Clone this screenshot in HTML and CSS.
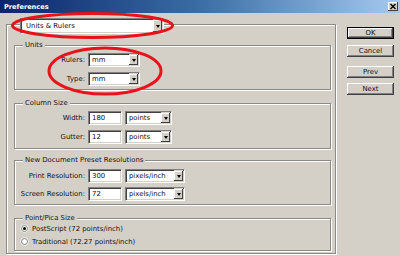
FILE: index.html
```html
<!DOCTYPE html>
<html>
<head>
<meta charset="utf-8">
<link rel="stylesheet" href="styles.css">
</head>
<body>
<div class="titlebar">
  <span class="title">Preferences</span>
  <span class="close"><svg width="8" height="7" viewBox="0 0 8 7"><path d="M1.5 1 L6.5 6 M6.5 1 L1.5 6" stroke="#000" stroke-width="1.4"/></svg></span>
</div>
<div class="content">
  <div class="main">
    <div class="head">
      <div class="select s-section">Units &amp; Rulers<span class="arrow"></span></div>
    </div>

    <div class="group g-units">
      <div class="legend">Units</div>
      <div class="rows">
        <span class="lbl">Rulers:</span>
        <div class="select s-mm">mm<span class="arrow"></span></div>
        <span class="lbl">Type:</span>
        <div class="select s-mm">mm<span class="arrow"></span></div>
      </div>
    </div>

    <div class="group g-col">
      <div class="legend">Column Size</div>
      <div class="rows rows3">
        <span class="lbl">Width:</span>
        <div class="input">180</div>
        <div class="select s-pts">points<span class="arrow"></span></div>
        <span class="lbl">Gutter:</span>
        <div class="input">12</div>
        <div class="select s-pts">points<span class="arrow"></span></div>
      </div>
    </div>

    <div class="group g-res">
      <div class="legend">New Document Preset Resolutions</div>
      <div class="rows rows3">
        <span class="lbl">Print Resolution:</span>
        <div class="input">300</div>
        <div class="select s-ppi">pixels/inch<span class="arrow"></span></div>
        <span class="lbl">Screen Resolution:</span>
        <div class="input">72</div>
        <div class="select s-ppi">pixels/inch<span class="arrow"></span></div>
      </div>
    </div>

    <div class="group g-pt">
      <div class="legend">Point/Pica Size</div>
      <div class="radios">
        <div class="radio-row"><span class="radio checked"></span><span>PostScript (72 points/inch)</span></div>
        <div class="radio-row"><span class="radio"></span><span>Traditional (72.27 points/inch)</span></div>
      </div>
    </div>
  </div>

  <div class="side">
    <div class="btn default">OK</div>
    <div class="btn cancel">Cancel</div>
    <div class="btn prev">Prev</div>
    <div class="btn next">Next</div>
  </div>
</div>

<svg class="marks" width="400" height="256" viewBox="0 0 400 256">
  <ellipse cx="92.5" cy="25.5" rx="80" ry="12" fill="none" stroke="#e8121a" stroke-width="3"/>
  <ellipse cx="105" cy="71" rx="56" ry="23" fill="none" stroke="#e8121a" stroke-width="3"/>
</svg>
</body>
</html>
```

FILE: styles.css
```css
html, body {
  margin: 0;
  padding: 0;
}
body {
  width: 400px;
  height: 256px;
  overflow: hidden;
  position: relative;
  background: #d4d0c8;
  font-family: "DejaVu Sans", Verdana, sans-serif;
  font-size: 6.9px;
  color: #111;
}

.titlebar {
  height: 13px;
  box-sizing: border-box;
  padding: 0 2px 0 4px;
  display: flex;
  align-items: center;
  justify-content: space-between;
  background: linear-gradient(to right, #0a246a 0%, #3a6ea5 50%, #a6caf0 100%);
}
.title {
  color: #fff;
  font-weight: bold;
  font-size: 6.6px;
}
.close {
  width: 10px;
  height: 9px;
  box-sizing: border-box;
  display: flex;
  align-items: center;
  justify-content: center;
  background: #d4d0c8;
  box-shadow: inset -1px -1px 0 #404040, inset 1px 1px 0 #fff;
}

.content {
  display: flex;
  padding: 11px 0 0 6px;
}

.main {
  width: 330px;
  height: 230px;
  box-sizing: border-box;
  border: 1px solid #8c8a84;
  box-shadow: inset 1px 1px 0 #fff, 1px 1px 0 #fff;
}
.head {
  margin: -7px 0 0 13px;
}

.select {
  height: 14px;
  box-sizing: border-box;
  display: flex;
  align-items: center;
  justify-content: space-between;
  padding-left: 3px;
  background: #fff;
  border: 1px solid;
  border-color: #808080 #fff #fff #808080;
  box-shadow: inset 1px 1px 0 #404040, inset -1px -1px 0 #d4d0c8;
}
.s-section {
  width: 144px;
  height: 16px;
  padding-left: 5px;
}
.s-mm { width: 52px; }
.s-pts { width: 47px; }
.s-ppi { width: 60px; }

.arrow {
  width: 9px;
  height: 100%;
  box-sizing: border-box;
  margin-right: 1px;
  background: #d4d0c8;
  box-shadow: inset -1px -1px 0 #404040, inset 1px 1px 0 #fff;
  border-top: 1px solid transparent;
  border-bottom: 1px solid transparent;
  display: flex;
  align-items: center;
  justify-content: center;
}
.arrow::before {
  content: "";
  border-left: 2.5px solid transparent;
  border-right: 2.5px solid transparent;
  border-top: 3px solid #000;
}

.input {
  width: 34px;
  height: 14px;
  box-sizing: border-box;
  padding-left: 3px;
  display: flex;
  align-items: center;
  background: #fff;
  border: 1px solid;
  border-color: #808080 #fff #fff #808080;
  box-shadow: inset 1px 1px 0 #404040, inset -1px -1px 0 #d4d0c8;
}

.group {
  width: 317px;
  box-sizing: border-box;
  margin-left: 7px;
  border: 1px solid #8c8a84;
  box-shadow: inset 1px 1px 0 #fff, 1px 1px 0 #fff;
}
.legend {
  width: max-content;
  margin: -5px 0 0 8px;
  padding: 0 2px;
  line-height: 9px;
  background: #d4d0c8;
}

.rows {
  display: grid;
  grid-template-columns: 70px max-content;
  column-gap: 3px;
  row-gap: 5px;
  align-items: center;
}
.rows3 {
  grid-template-columns: 70px max-content max-content;
}
.lbl {
  text-align: right;
  line-height: 14px;
  white-space: nowrap;
}

.g-units { margin-top: 11px; }
.g-units .rows { padding: 3px 0 3px; }

.g-col { margin-top: 13px; }
.g-col .rows { padding: 3px 0 4px; }

.g-res { margin-top: 11px; }
.g-res .rows { padding: 4px 0 3px; row-gap: 4px; }

.g-pt { margin-top: 13px; }
.radios {
  margin-top: -1px;
  padding-bottom: 2px;
}
.radio-row {
  height: 13px;
  display: flex;
  align-items: center;
  gap: 4px;
  padding-left: 6px;
}
.radio {
  width: 7px;
  height: 7px;
  box-sizing: border-box;
  border-radius: 50%;
  background: #fff;
  border: 1px solid #808080;
  box-shadow: 0 0 0 0.5px #fff;
  display: flex;
  align-items: center;
  justify-content: center;
}
.radio.checked::before {
  content: "";
  width: 3px;
  height: 3px;
  border-radius: 50%;
  background: #000;
}

.side {
  margin-left: 11px;
  padding-top: 3px;
  display: flex;
  flex-direction: column;
}
.btn {
  width: 47px;
  height: 12px;
  box-sizing: border-box;
  display: flex;
  align-items: center;
  justify-content: center;
  background: #d4d0c8;
  box-shadow: inset -1px -1px 0 #404040, inset 1px 1px 0 #fff, inset -2px -2px 0 #808080;
}
.btn.default {
  border: 1px solid #000;
}
.cancel { margin-top: 6px; }
.prev { margin-top: 9px; }
.next { margin-top: 5px; }

.marks {
  position: absolute;
  left: 0;
  top: 0;
  pointer-events: none;
}
```
